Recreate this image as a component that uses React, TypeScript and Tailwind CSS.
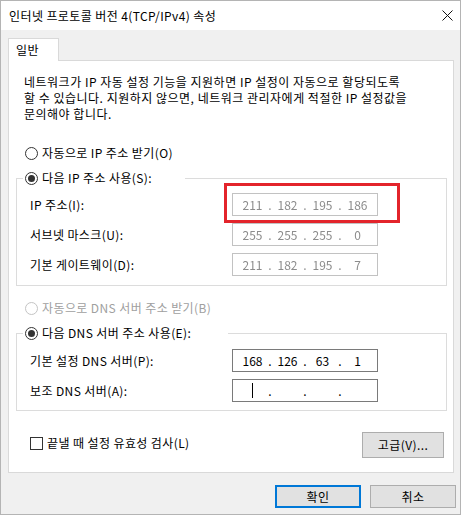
import { Fragment } from 'react';

function Radio({ checked = false, disabled = false }: { checked?: boolean; disabled?: boolean }) {
  return (
    <span
      className={`flex h-[13px] w-[13px] shrink-0 items-center justify-center rounded-full border bg-white ${
        disabled ? 'border-[#c4c4c4]' : 'border-[#333333]'
      }`}
    >
      {checked && <span className="h-[7px] w-[7px] rounded-full bg-[#333333]" />}
    </span>
  );
}

function IpField({ values, blurred = false, caret = false }: { values: string[]; blurred?: boolean; caret?: boolean }) {
  return (
    <div
      className={`flex h-[23px] w-[146px] items-center border bg-white pl-[3px] tracking-normal ${
        blurred ? 'border-[#c2c2c2] text-[#8c8c8c]' : 'border-[#7a7a7a] text-black'
      }`}
    >
      <div className={`flex items-center ${blurred ? 'blur-[0.7px]' : ''}`}>
        {values.map((v, i) => (
          <Fragment key={i}>
            <span className="flex h-[15px] w-[33px] items-center justify-center">
              {caret && i === 0 ? <span className="h-[15px] w-px bg-black" /> : v}
            </span>
            {i < 3 && <span className="flex w-[2px] justify-center">.</span>}
          </Fragment>
        ))}
      </div>
    </div>
  );
}

function Row({ label, children }: { label: string; children: React.ReactNode }) {
  return (
    <div className="flex h-[23px] items-center">
      <span className="w-[215px] pl-[13px]">{label}</span>
      {children}
    </div>
  );
}

export default function App() {
  return (
    <div className="flex h-[515px] w-[461px] flex-col border border-[#b4b4b4] bg-[#f0f0f0] font-['Noto_Sans_CJK_KR',sans-serif] text-[12px] leading-[16px] tracking-[0.4px] text-black">
      {/* title bar */}
      <div className="flex h-[29px] shrink-0 items-center justify-between bg-white pl-[8px] pr-[6px]">
        <span>인터넷 프로토콜 버전 4(TCP/IPv4) 속성</span>
        <svg width="11" height="11" viewBox="0 0 11 11" className="mr-[1px]">
          <path d="M0.5 0.5 L10.5 10.5 M10.5 0.5 L0.5 10.5" stroke="#111" strokeWidth="1" fill="none" />
        </svg>
      </div>

      <div className="flex flex-col pl-[7px] pt-[8px]">
        {/* tab */}
        <div className="relative z-10 -mb-px flex h-[23px] w-[51px] items-center border-x border-t border-[#d9d9d9] bg-white pl-[7px]">
          일반
        </div>

        {/* panel */}
        <div className="flex w-[446px] flex-col border border-[#d9d9d9] bg-white">
          <p className="mt-[13px] whitespace-nowrap px-[15px] leading-[16px] tracking-[0.5px]">
            네트워크가 IP 자동 설정 기능을 지원하면 IP 설정이 자동으로 할당되도록
            <br />
            할 수 있습니다. 지원하지 않으면, 네트워크 관리자에게 적절한 IP 설정값을
            <br />
            문의해야 합니다.
          </p>

          <label className="mt-[23px] flex h-[16px] items-center gap-[4px] pl-[16px]">
            <Radio />
            <span>자동으로 IP 주소 받기(O)</span>
          </label>

          <fieldset className="ml-[7px] mr-[6px] mt-[9px] border border-[#dcdcdc] pb-[9px] pt-[7px]">
            <legend className="ml-[6px] flex h-[16px] w-[162px] items-center gap-[4px] bg-white px-[2px]">
              <Radio checked />
              <span>다음 IP 주소 사용(S):</span>
            </legend>
            <div className="flex flex-col gap-[7px]">
              <Row label="IP 주소(I):">
                <div className="relative">
                  <IpField values={['211', '182', '195', '186']} blurred />
                  <div className="absolute -left-[8px] -top-[10px] h-[40px] w-[176px] border-[3px] border-[#e3242b]" />
                </div>
              </Row>
              <Row label="서브넷 마스크(U):">
                <IpField values={['255', '255', '255', '0']} blurred />
              </Row>
              <Row label="기본 게이트웨이(D):">
                <IpField values={['211', '182', '195', '7']} blurred />
              </Row>
            </div>
          </fieldset>

          <label className="mt-[14px] flex h-[16px] items-center gap-[4px] pl-[16px] text-[#a0a0a0]">
            <Radio disabled />
            <span>자동으로 DNS 서버 주소 받기(B)</span>
          </label>

          <fieldset className="ml-[7px] mr-[6px] mt-[9px] border border-[#dcdcdc] pb-[8px] pt-[8px]">
            <legend className="ml-[6px] flex h-[16px] w-[205px] items-center gap-[4px] bg-white px-[2px]">
              <Radio checked />
              <span>다음 DNS 서버 주소 사용(E):</span>
            </legend>
            <div className="flex flex-col gap-[7px]">
              <Row label="기본 설정 DNS 서버(P):">
                <IpField values={['168', '126', '63', '1']} />
              </Row>
              <Row label="보조 DNS 서버(A):">
                <IpField values={['', '', '', '']} caret />
              </Row>
            </div>
          </fieldset>

          <div className="mt-[21px] flex items-start justify-between pb-[14px] pl-[21px] pr-[9px]">
            <label className="mt-[3px] flex items-center gap-[4px]">
              <span className="h-[13px] w-[13px] border border-[#333333] bg-white" />
              <span>끝낼 때 설정 유효성 검사(L)</span>
            </label>
            <button className="flex h-[26px] w-[82px] items-center justify-center border border-[#adadad] bg-[#e1e1e1]">
              고급(V)...
            </button>
          </div>
        </div>

        {/* dialog buttons */}
        <div className="mt-[12px] flex justify-end gap-[9px] pr-[4px]">
          <button className="flex h-[23px] w-[86px] items-center justify-center border-2 border-[#0078d7] bg-[#e1e1e1]">
            확인
          </button>
          <button className="flex h-[23px] w-[86px] items-center justify-center border border-[#adadad] bg-[#e1e1e1]">
            취소
          </button>
        </div>
      </div>
    </div>
  );
}
